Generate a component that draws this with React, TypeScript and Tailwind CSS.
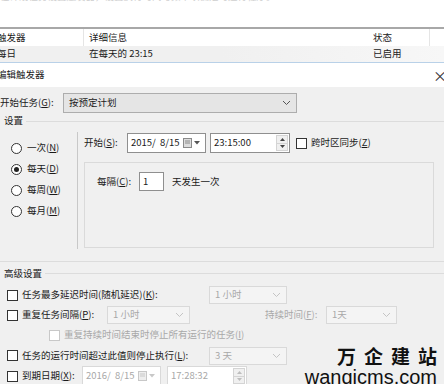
const font = { fontFamily: '"Noto Sans CJK SC", "Noto Sans", sans-serif' };

function Chevron({ dim }: { dim?: boolean }) {
  return (
    <svg width="9" height="6" viewBox="0 0 9 6" className="shrink-0">
      <path d="M1 1 L4.5 4.5 L8 1" fill="none" stroke={dim ? "#c4c4c4" : "#555"} strokeWidth="1" />
    </svg>
  );
}

function Combo({ text, w, dim }: { text: string; w: string; dim?: boolean }) {
  return (
    <div className={`${w} h-[18px] flex items-center justify-between px-[5px] border ${dim ? "border-[#d9d9d9] bg-[#f4f4f4] text-[#a8a8a8]" : "border-[#adadad] bg-[#e5e5e5] text-[#1a1a1a]"}`}>
      <span>{text}</span>
      <Chevron dim={dim} />
    </div>
  );
}

function CalIcon({ dim }: { dim?: boolean }) {
  const c = dim ? "#c8c8c8" : "#8a8a8a";
  return (
    <div className="flex items-center gap-[2px]">
      <svg width="9" height="10" viewBox="0 0 9 10">
        <rect x="0.5" y="0.5" width="8" height="9" fill={dim ? "#eee" : "#ddd"} stroke={c} />
        <line x1="2" y1="3" x2="7" y2="3" stroke={c} />
        <line x1="2" y1="5" x2="7" y2="5" stroke={c} />
      </svg>
      <svg width="6" height="4" viewBox="0 0 6 4">
        <path d="M0 0 L6 0 L3 3.5 Z" fill={dim ? "#c8c8c8" : "#555"} />
      </svg>
    </div>
  );
}

function DateBox({ text, dim }: { text: string; dim?: boolean }) {
  return (
    <div className={`w-[79px] h-[20px] flex items-center justify-between pl-[3px] pr-[5px] border ${dim ? "border-[#d9d9d9] text-[#a8a8a8]" : "border-[#8f8f8f] text-[#1a1a1a]"} bg-white`}>
      <span className="whitespace-pre">{text}</span>
      <CalIcon dim={dim} />
    </div>
  );
}

function TimeBox({ text, dim }: { text: string; dim?: boolean }) {
  const c = dim ? "#bdbdbd" : "#444";
  return (
    <div className={`w-[80px] h-[20px] flex items-center justify-between pl-[3px] pr-[1px] border ${dim ? "border-[#d9d9d9] text-[#a8a8a8]" : "border-[#8f8f8f] text-[#1a1a1a]"} bg-white`}>
      <span>{text}</span>
      <div className="w-[12px] h-[16px] flex flex-col border border-[#d4d4d4] bg-[#f0f0f0]">
        <div className="flex-1 flex items-center justify-center">
          <svg width="5" height="3" viewBox="0 0 5 3"><path d="M0 3 L2.5 0 L5 3 Z" fill={c} /></svg>
        </div>
        <div className="flex-1 flex items-center justify-center border-t border-[#d4d4d4]">
          <svg width="5" height="3" viewBox="0 0 5 3"><path d="M0 0 L5 0 L2.5 3 Z" fill={c} /></svg>
        </div>
      </div>
    </div>
  );
}

function Check({ dim }: { dim?: boolean }) {
  return <div className={`w-[11px] h-[11px] shrink-0 border ${dim ? "border-[#c8c8c8]" : "border-[#333]"} bg-white`} />;
}

function Radio({ label, k, on }: { label: string; k: string; on?: boolean }) {
  return (
    <div className="h-[20px] flex items-center gap-[5px]">
      <div className="w-[11px] h-[11px] rounded-full border border-[#333] bg-white flex items-center justify-center">
        {on && <div className="w-[5px] h-[5px] rounded-full bg-[#222]" />}
      </div>
      <span>{label}(<span className="underline">{k}</span>)</span>
    </div>
  );
}

export default function App() {
  return (
    <div style={font} className="w-[444px] h-[384px] overflow-hidden bg-white text-[9.5px] leading-none whitespace-nowrap text-[#1a1a1a] flex flex-col">
      <div className="h-[27px] shrink-0 overflow-hidden">
        <div className="-mt-[9px] text-[#cfcfcf] leading-[11px]">在计划任务设置触发器，设置执行时间与频率以便定时运行程序。</div>
      </div>

      <div className="h-[19px] shrink-0 flex items-center border-t-2 border-[#a8a8a8]">
        <div className="w-[87px] h-full flex items-center -ml-[3px] border-r border-[#e5e5e5]">触发器</div>
        <div className="w-[289px] pl-[5px]">详细信息</div>
        <div className="w-[57px] h-full flex items-center border-r border-[#e5e5e5]">状态</div>
      </div>
      <div className="h-[17px] shrink-0 flex items-center border-b border-[#b9d1e8] bg-gradient-to-r from-[#f0f0f0] via-[#f0f0f0] to-[#f7f7f7]">
        <div className="w-[87px] -ml-[3px]">每日</div>
        <div className="w-[289px] pl-[5px]">在每天的 23:15</div>
        <div className="w-[57px]">已启用</div>
      </div>

      <div className="h-[24px] shrink-0 flex items-center justify-between bg-white">
        <span className="-ml-[3px]">编辑触发器</span>
        <span className="text-[14px] text-[#333] -mr-[3px]">×</span>
      </div>

      <div className="flex-1 bg-[#f0f0f0] flex flex-col pt-[6px]">
        <div className="h-[20px] flex items-center">
          <span className="w-[63px]">开始任务(<span className="underline">G</span>):</span>
          <div className="w-[234px] h-[20px] flex items-center justify-between px-[5px] border border-[#adadad] bg-[#e5e5e5]">
            <span>按预定计划</span>
            <Chevron />
          </div>
        </div>

        <div className="h-[16px] flex items-center">
          <span className="pl-[4px] pr-[3px]">设置</span>
          <div className="flex-1 h-px bg-[#dcdcdc]" />
        </div>

        <div className="h-[124px] flex">
          <div className="w-[78px] border-r border-[#c8c8c8] pl-[11px] pt-[6px] flex flex-col gap-[1px] mt-[3px] mb-[4px]">
            <Radio label="一次" k="N" />
            <Radio label="每天" k="D" on />
            <Radio label="每周" k="W" />
            <Radio label="每月" k="M" />
          </div>
          <div className="flex-1 pl-[6px] pt-[4px] flex flex-col">
            <div className="h-[20px] flex items-center">
              <span className="w-[43px]">开始(<span className="underline">S</span>):</span>
              <DateBox text="2015/  8/15" />
              <div className="w-[4px]" />
              <TimeBox text="23:15:00" />
              <div className="w-[6px]" />
              <Check />
              <span className="ml-[4px]">跨时区同步(<span className="underline">Z</span>)</span>
            </div>
            <div className="mt-[9px] w-[350px] h-[86px] border border-[#dadada] flex items-start pt-[9px] pl-[12px]">
              <div className="h-[19px] flex items-center">
                <span className="w-[42px]">每隔(<span className="underline">C</span>):</span>
                <div className="w-[25px] h-[19px] border border-[#8f8f8f] bg-white flex items-center pl-[3px]">1</div>
                <span className="ml-[8px]">天发生一次</span>
              </div>
            </div>
          </div>
        </div>

        <div className="mt-[8px] h-px bg-[#dcdcdc]" />
        <div className="h-[23px] flex items-center">
          <span className="pl-[4px] pr-[3px]">高级设置</span>
          <div className="flex-1 h-px bg-[#dcdcdc]" />
        </div>

        <div className="flex flex-col pl-[7px]">
          <div className="h-[20px] flex items-center">
            <Check />
            <span className="ml-[4px] w-[187px]">任务最多延迟时间(随机延迟)(<span className="underline">K</span>):</span>
            <Combo text="1 小时" w="w-[78px]" dim />
          </div>
          <div className="h-[20px] flex items-center">
            <Check />
            <span className="ml-[4px] w-[85px]">重复任务间隔(<span className="underline">P</span>):</span>
            <Combo text="1 小时" w="w-[83px]" dim />
            <span className="ml-[75px] w-[61px] text-[#a8a8a8]">持续时间(<span className="underline">F</span>):</span>
            <Combo text="1天" w="w-[71px]" dim />
          </div>
          <div className="h-[20px] flex items-center pl-[42px]">
            <Check dim />
            <span className="ml-[4px] text-[#a8a8a8]">重复持续时间结束时停止所有运行的任务(<span className="underline">I</span>)</span>
          </div>
          <div className="h-[21px] flex items-center">
            <Check />
            <span className="ml-[4px] w-[187px]">任务的运行时间超过此值则停止执行(<span className="underline">L</span>):</span>
            <Combo text="3 天" w="w-[78px]" dim />
          </div>
          <div className="h-[20px] flex items-center">
            <Check />
            <span className="ml-[4px] w-[60px]">到期日期(<span className="underline">X</span>):</span>
            <DateBox text="2016/  8/15" dim />
            <div className="w-[6px]" />
            <TimeBox text="17:28:32" dim />
          </div>
        </div>
      </div>

      <div className="relative">
        <div className="absolute right-[7px] bottom-[-1px] flex flex-col items-end text-[#111]">
          <div className="text-[19px] font-bold tracking-[8px] mr-[-8px] leading-[23px]" style={{ fontFamily: '"Noto Sans CJK SC", sans-serif' }}>万企建站</div>
          <div className="text-[20px] leading-[20px]" style={{ fontFamily: '"Liberation Sans", sans-serif' }}>wanqicms.com</div>
        </div>
      </div>
    </div>
  );
}
